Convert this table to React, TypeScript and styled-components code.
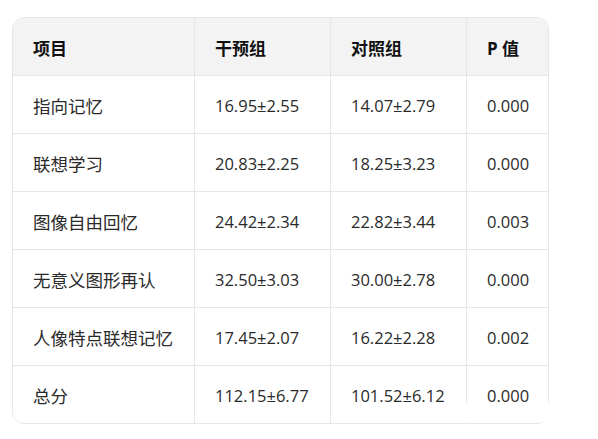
import React from 'react'
import styled, { createGlobalStyle } from 'styled-components'

const GlobalStyle = createGlobalStyle`
  html, body {
    margin: 0;
    padding: 0;
    background: #ffffff;
  }

  body {
    font-family: "Open Sans", "Noto Sans CJK SC", sans-serif;
  }
`

const headers = ['项目', '干预组', '对照组', 'P 值']

const rows: string[][] = [
  ['指向记忆', '16.95±2.55', '14.07±2.79', '0.000'],
  ['联想学习', '20.83±2.25', '18.25±3.23', '0.000'],
  ['图像自由回忆', '24.42±2.34', '22.82±3.44', '0.003'],
  ['无意义图形再认', '32.50±3.03', '30.00±2.78', '0.000'],
  ['人像特点联想记忆', '17.45±2.07', '16.22±2.28', '0.002'],
  ['总分', '112.15±6.77', '101.52±6.12', '0.000'],
]

export default function App() {
  return (
    <>
      <GlobalStyle />
      <Page>
        <TableWrap>
          <Grid>
            {headers.map((h, i) => (
              <HeadCell key={h} $last={i === headers.length - 1}>
                {h}
              </HeadCell>
            ))}
            {rows.map((row, r) =>
              row.map((val, c) => (
                <Cell
                  key={`${r}-${c}`}
                  $label={c === 0}
                  $last={c === row.length - 1}
                  $bottom={r === rows.length - 1}
                >
                  {val}
                </Cell>
              ))
            )}
          </Grid>
          <Smudge />
        </TableWrap>
      </Page>
    </>
  )
}

const Page = styled.div`
  padding: 17px 0 0 12px;
  width: 598px;
  height: 439px;
  box-sizing: border-box;
`

const TableWrap = styled.div`
  position: relative;
  width: 537px;
`

const Grid = styled.div`
  display: grid;
  grid-template-columns: 182px 136px 136px 81px;
  border: 1px solid #e6e6e6;
  border-radius: 12px;
  overflow: hidden;
`

const HeadCell = styled.div<{ $last?: boolean }>`
  box-sizing: border-box;
  height: 58px;
  display: flex;
  align-items: center;
  padding: 1px 0 0 20px;
  font-size: 17px;
  font-weight: 700;
  color: #111111;
  background: #f3f3f3;
  white-space: nowrap;
  border-right: ${({ $last }) => ($last ? 'none' : '1px solid #e6e6e6')};
  border-bottom: 1px solid #e6e6e6;
`

const Cell = styled.div<{ $label?: boolean; $last?: boolean; $bottom?: boolean }>`
  box-sizing: border-box;
  height: ${({ $bottom }) => ($bottom ? '57px' : '58px')};
  display: flex;
  align-items: center;
  padding: 2px 0 0 20px;
  font-size: ${({ $label }) => ($label ? '17.5px' : '16.5px')};
  color: #2a2a2a;
  background: #ffffff;
  white-space: nowrap;
  border-right: ${({ $last }) => ($last ? 'none' : '1px solid #e6e6e6')};
  border-bottom: ${({ $bottom }) => ($bottom ? 'none' : '1px solid #e6e6e6')};
`

/* white patch over the lower right corner, as in the capture */
const Smudge = styled.div`
  position: absolute;
  left: 412px;
  top: 386px;
  width: 138px;
  height: 19px;
  background: #ffffff;
`
